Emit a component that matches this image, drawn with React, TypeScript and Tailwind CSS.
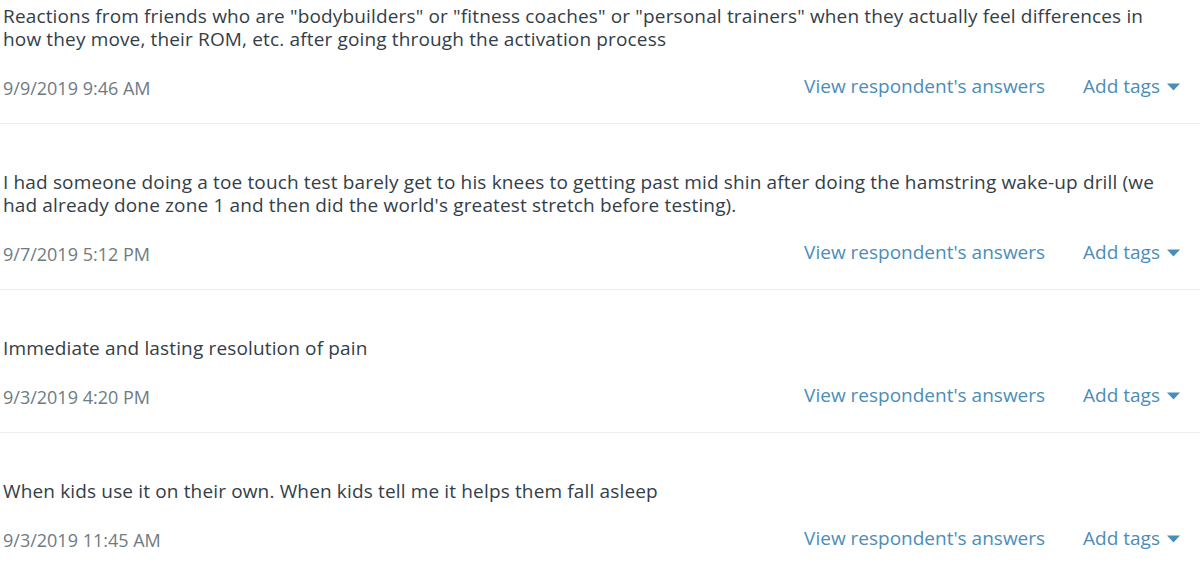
const RESPONSES = [
  {
    text: 'Reactions from friends who are "bodybuilders" or "fitness coaches" or "personal trainers" when they actually feel differences in how they move, their ROM, etc. after going through the activation process',
    date: "9/9/2019 9:46 AM",
  },
  {
    text: "I had someone doing a toe touch test barely get to his knees to getting past mid shin after doing the hamstring wake-up drill (we had already done zone 1 and then did the world's greatest stretch before testing).",
    date: "9/7/2019 5:12 PM",
  },
  {
    text: "Immediate and lasting resolution of pain",
    date: "9/3/2019 4:20 PM",
  },
  {
    text: "When kids use it on their own. When kids tell me it helps them fall asleep",
    date: "9/3/2019 11:45 AM",
  },
];

function Caret() {
  return (
    <svg width="13" height="8" viewBox="0 0 13 8" className="ml-[7px] mt-[1px]">
      <path d="M0 0.5 H13 L6.5 7.5 Z" fill="#4b8db8" />
    </svg>
  );
}

export default function App() {
  return (
    <div
      className="w-[1200px] h-[570px] overflow-hidden bg-white"
      style={{ fontFamily: '"Open Sans", "Liberation Sans", sans-serif' }}
    >
      {RESPONSES.map((r, i) => (
        <div
          key={i}
          className={`border-b border-[#ececec] pl-[3px] pr-[20px] pb-[23px] ${
            i === 0 ? "pt-[5px]" : "pt-[47px]"
          }`}
        >
          <p className="text-[19px] leading-[23px] tracking-[0.15px] text-[#333e48]">{r.text}</p>
          <div className="mt-[26px] flex items-center justify-between">
            <span className="text-[18px] leading-[23px] text-[#6f7b82]">{r.date}</span>
            <div className="flex items-center -mt-[4px] text-[19px] leading-[23px] text-[#4b8db8]">
              <span>View respondent's answers</span>
              <span className="ml-[38px] flex items-center">
                Add tags
                <Caret />
              </span>
            </div>
          </div>
        </div>
      ))}
    </div>
  );
}
